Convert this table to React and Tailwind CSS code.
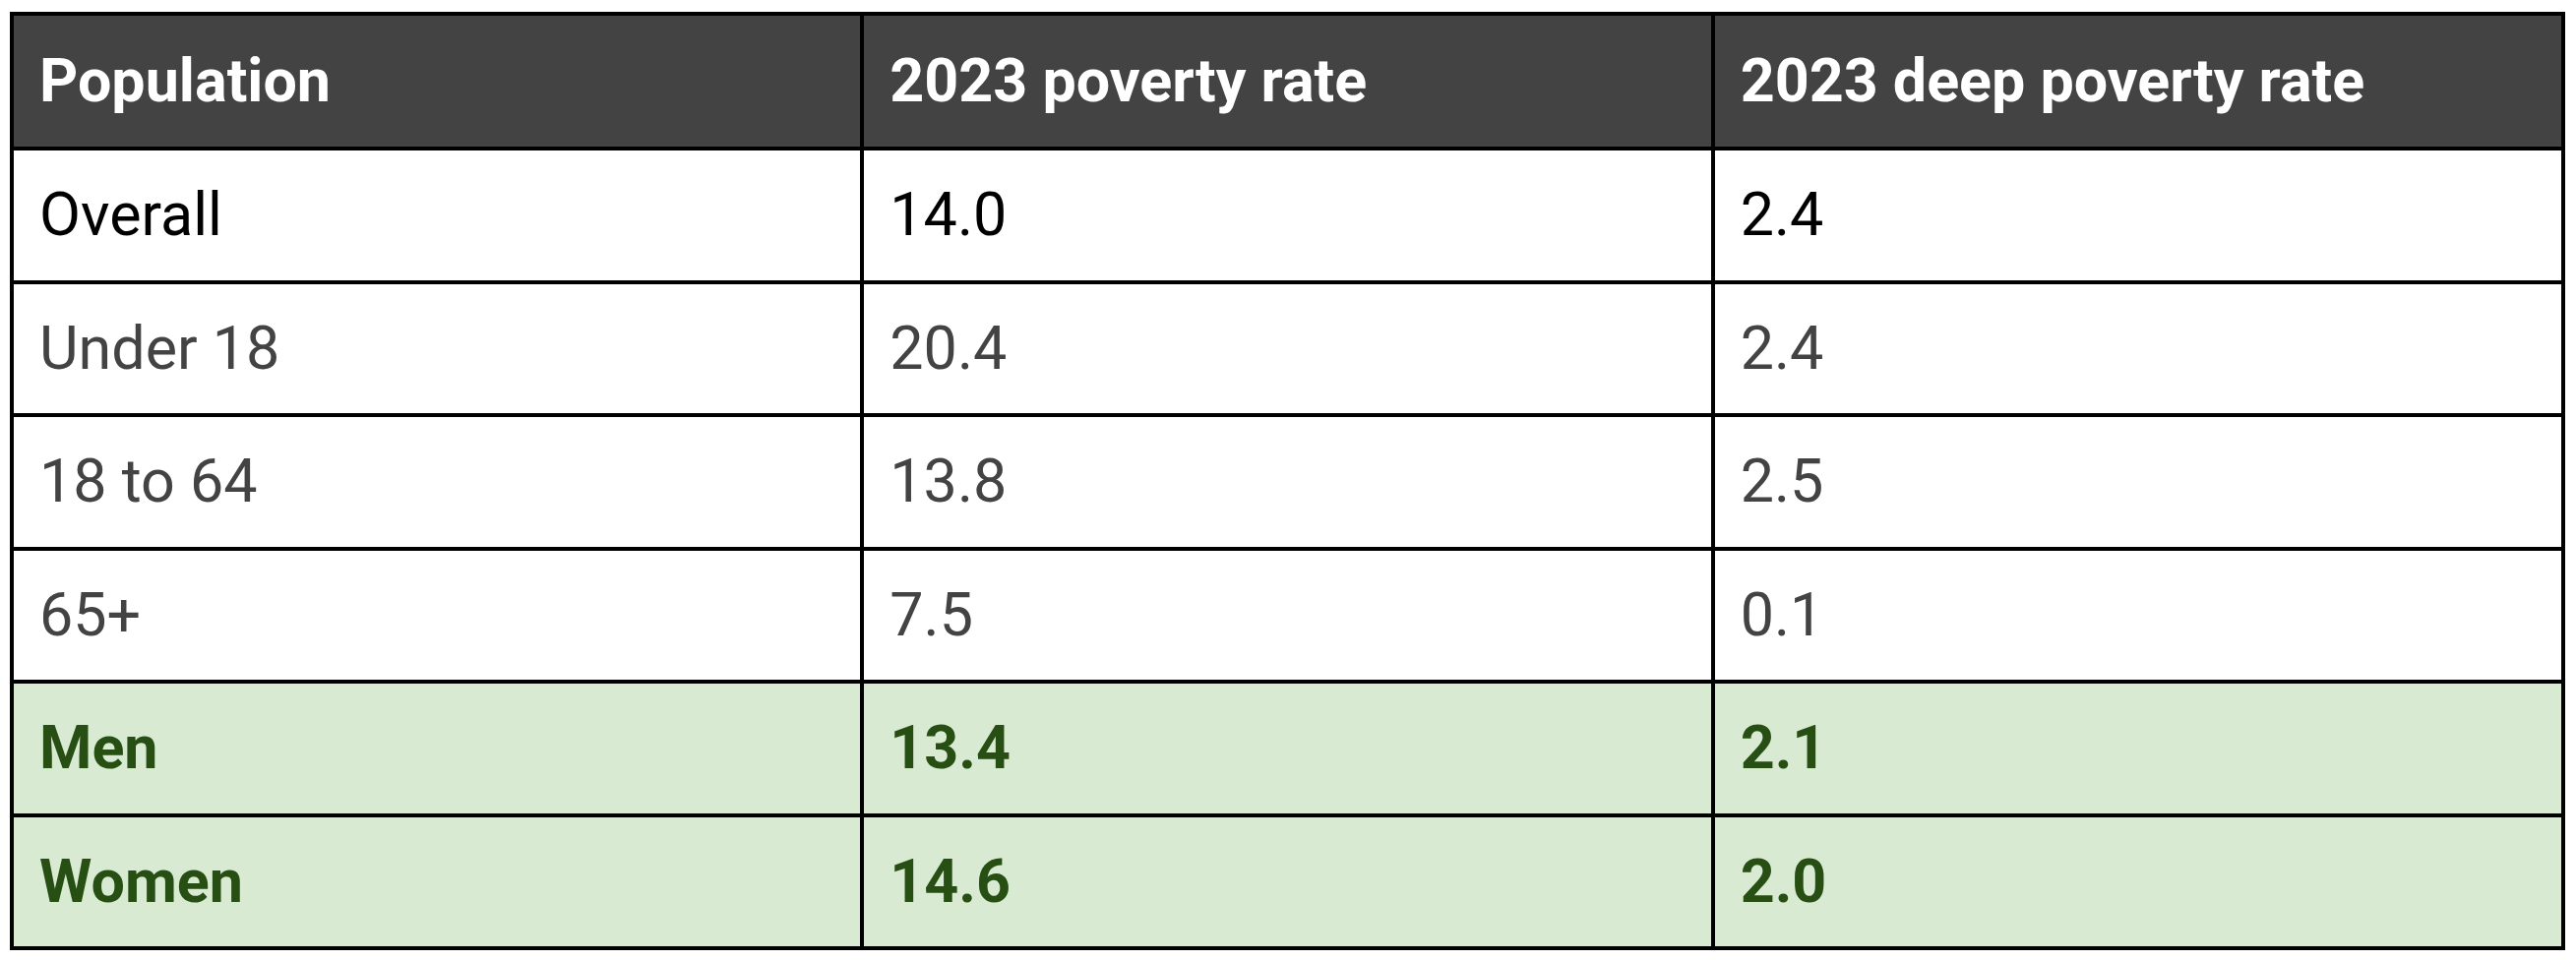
const rows = [
  { name: 'Overall', rate: '14.0', deep: '2.4', tone: 'plain' },
  { name: 'Under 18', rate: '20.4', deep: '2.4', tone: 'muted' },
  { name: '18 to 64', rate: '13.8', deep: '2.5', tone: 'muted' },
  { name: '65+', rate: '7.5', deep: '0.1', tone: 'muted' },
  { name: 'Men', rate: '13.4', deep: '2.1', tone: 'green' },
  { name: 'Women', rate: '14.6', deep: '2.0', tone: 'green' },
]

const toneClass = {
  plain: 'bg-white text-black font-normal',
  muted: 'bg-white text-[#434343] font-normal',
  green: 'bg-[#d9ead3] text-[#274e13] font-bold',
}

const App = () => {
  return (
    <div className="min-h-[976px] bg-white pt-[12px] pl-[10px] font-['Roboto',sans-serif]">
      <table className="w-[2597px] table-fixed border-collapse border-4 border-black text-[61px] leading-none">
        <thead>
          <tr className="h-[137px] bg-[#434343] text-white">
            <th className="border-4 border-black px-[26px] text-left align-middle font-bold">Population</th>
            <th className="border-4 border-black px-[26px] text-left align-middle font-bold">2023 poverty rate</th>
            <th className="border-4 border-black px-[26px] text-left align-middle font-bold">2023 deep poverty rate</th>
          </tr>
        </thead>
        <tbody>
          {rows.map((row) => (
            <tr key={row.name} className={`h-[135.5px] ${toneClass[row.tone]}`}>
              <td className="border-4 border-black px-[26px] align-middle">{row.name}</td>
              <td className="border-4 border-black px-[26px] align-middle">{row.rate}</td>
              <td className="border-4 border-black px-[26px] align-middle">{row.deep}</td>
            </tr>
          ))}
        </tbody>
      </table>
    </div>
  )
}

export default App
